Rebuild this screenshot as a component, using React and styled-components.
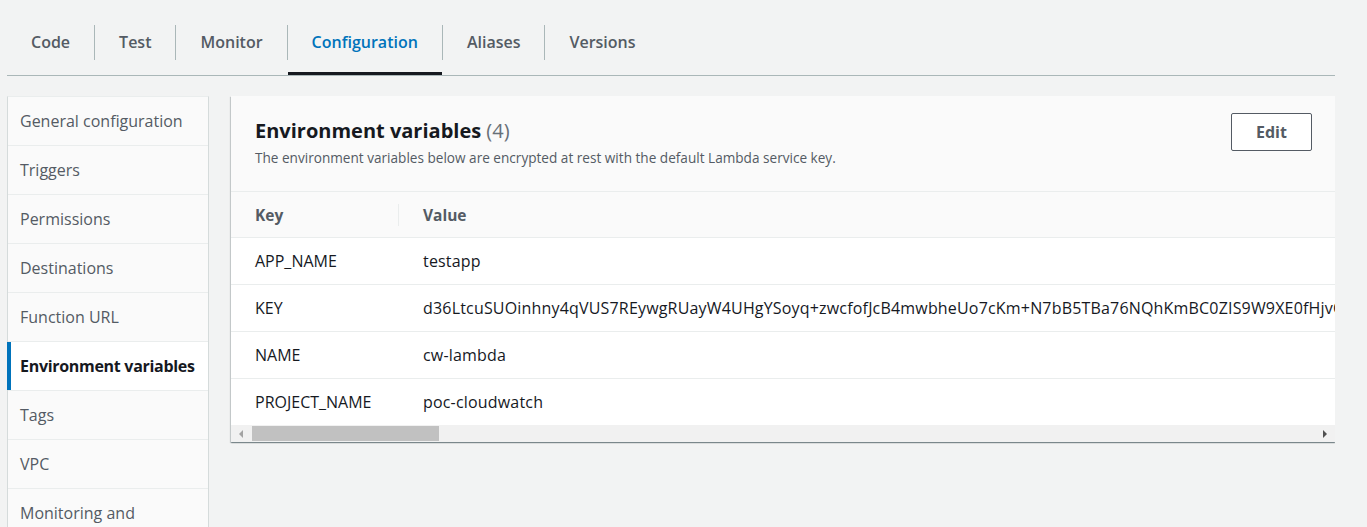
import React from "react";
import styled, { createGlobalStyle } from "styled-components";

const GlobalStyle = createGlobalStyle`
  body {
    margin: 0;
    background: #f2f3f3;
    font-family: "Open Sans", "Noto Sans", sans-serif;
    color: #16191f;
  }
`;

const Page = styled.div`
  width: 1328px;
  padding-left: 7px;
  height: 527px;
  overflow: hidden;
`;

const TabBar = styled.div`
  display: flex;
  align-items: flex-start;
  padding-top: 24px;
  border-bottom: 1px solid #aab7b8;
`;

const Tab = styled.div`
  padding: 0 24px 12px;
  line-height: 36px;
  font-size: 16px;
  font-weight: 600;
  color: ${(p) => (p.$active ? "#0073bb" : "#545b64")};
  border-bottom: 3px solid ${(p) => (p.$active ? "#16191f" : "transparent")};
`;

const TabDivider = styled.div`
  width: 1px;
  height: 35px;
  margin-top: 1px;
  background: #aab7b8;
`;

const Body = styled.div`
  display: flex;
  align-items: flex-start;
  gap: 22px;
  padding-top: 20px;
`;

const Sidebar = styled.div`
  width: 200px;
  flex-shrink: 0;
  border-left: 1px solid #d5dbdb;
  border-right: 1px solid #d5dbdb;
  border-top: 1px solid #eaeded;
  background: #fafafa;
`;

const NavItem = styled.div`
  position: relative;
  min-height: 24px;
  padding: 12px 8px 12px 12px;
  line-height: 24px;
  font-size: 16px;
  border-bottom: 1px solid #eaeded;
  background: ${(p) => (p.$active ? "#ffffff" : "#fafafa")};
  color: ${(p) => (p.$active ? "#16191f" : "#545b64")};
  font-weight: ${(p) => (p.$active ? 700 : 400)};
  white-space: ${(p) => (p.$active ? "nowrap" : "normal")};
  letter-spacing: ${(p) => (p.$active ? "-0.3px" : "0")};

  &::before {
    content: "";
    display: ${(p) => (p.$active ? "block" : "none")};
    position: absolute;
    left: -1px;
    top: 0;
    bottom: 0;
    width: 4px;
    background: #0073bb;
  }
`;

const Panel = styled.div`
  flex: 1;
  background: #ffffff;
  overflow: hidden;
  box-shadow: 0 1px 1px 0 rgba(0, 28, 36, 0.3),
    1px 1px 1px 0 rgba(0, 28, 36, 0.15), -1px 1px 1px 0 rgba(0, 28, 36, 0.15);
`;

const PanelHeader = styled.div`
  display: flex;
  justify-content: space-between;
  align-items: flex-start;
  height: 95px;
  padding: 0 23px 0 24px;
  background: #fafafa;
  border-bottom: 1px solid #eaeded;
`;

const Heading = styled.div`
  padding-top: 21px;
`;

const Title = styled.h2`
  margin: 0;
  font-size: 20px;
  line-height: 28px;
  font-weight: 700;
  color: #16191f;
`;

const Count = styled.span`
  font-weight: 400;
  color: #687078;
`;

const Description = styled.p`
  margin: 4px 0 0;
  font-size: 13.6px;
  line-height: 18px;
  color: #545b64;
`;

const EditButton = styled.button`
  margin-top: 17px;
  width: 81px;
  height: 38px;
  border: 1px solid #545b64;
  border-radius: 2px;
  background: #ffffff;
  font-family: inherit;
  font-size: 16px;
  font-weight: 700;
  color: #545b64;
`;

const TableWrap = styled.div`
  overflow: hidden;
`;

const Row = styled.div`
  display: flex;
  align-items: center;
  height: ${(p) => (p.$head ? "45px" : "46px")};
  border-bottom: 1px solid #eaeded;
  background: ${(p) => (p.$head ? "#fafafa" : "#ffffff")};
  font-size: ${(p) => (p.$head ? "15.5px" : "16px")};
  font-weight: ${(p) => (p.$head ? 700 : 400)};
  color: ${(p) => (p.$head ? "#545b64" : "#16191f")};
  white-space: nowrap;

  &:last-child {
    border-bottom: none;
  }
`;

const KeyCell = styled.div`
  width: 143px;
  flex-shrink: 0;
  padding-left: 24px;
`;

const HeadDivider = styled.div`
  width: 1px;
  height: 22px;
  background: #eaeded;
  flex-shrink: 0;
`;

const ValueCell = styled.div`
  padding-left: ${(p) => (p.$body ? "25px" : "24px")};
  letter-spacing: ${(p) => (p.$body ? "0.18px" : "0")};
`;

const Scrollbar = styled.div`
  display: flex;
  align-items: center;
  height: 17px;
  background: #f1f1f1;
`;

const Arrow = styled.div`
  width: 0;
  height: 0;
  border-top: 4px solid transparent;
  border-bottom: 4px solid transparent;
  ${(p) =>
    p.$right
      ? "border-left: 4px solid #505050; margin: 0 8px 0 auto;"
      : "border-right: 4px solid #a3a3a3; margin: 0 0 0 8px;"}
`;

const Thumb = styled.div`
  width: 187px;
  height: 15px;
  margin-left: 9px;
  background: #c1c1c1;
`;

const tabs = ["Code", "Test", "Monitor", "Configuration", "Aliases", "Versions"];

const nav = [
  "General configuration",
  "Triggers",
  "Permissions",
  "Destinations",
  "Function URL",
  "Environment variables",
  "Tags",
  "VPC",
  "Monitoring and operations tools",
];

const vars = [
  ["APP_NAME", "testapp"],
  [
    "KEY",
    "d36LtcuSUOinhny4qVUS7REywgRUayW4UHgYSoyq+zwcfofJcB4mwbheUo7cKm+N7bB5TBa76NQhKmBC0ZIS9W9XE0fHjvQ2mK8pRt",
  ],
  ["NAME", "cw-lambda"],
  ["PROJECT_NAME", "poc-cloudwatch"],
];

const App = () => {
  return (
    <Page>
      <GlobalStyle />
      <TabBar>
        {tabs.map((t, i) => (
          <React.Fragment key={t}>
            {i > 0 && <TabDivider />}
            <Tab $active={t === "Configuration"}>{t}</Tab>
          </React.Fragment>
        ))}
      </TabBar>
      <Body>
        <Sidebar>
          {nav.map((n) => (
            <NavItem key={n} $active={n === "Environment variables"}>
              {n}
            </NavItem>
          ))}
        </Sidebar>
        <Panel>
          <PanelHeader>
            <Heading>
              <Title>
                Environment variables <Count>(4)</Count>
              </Title>
              <Description>
                The environment variables below are encrypted at rest with the
                default Lambda service key.
              </Description>
            </Heading>
            <EditButton>Edit</EditButton>
          </PanelHeader>
          <TableWrap>
            <Row $head>
              <KeyCell>Key</KeyCell>
              <HeadDivider />
              <ValueCell>Value</ValueCell>
            </Row>
            {vars.map(([k, v]) => (
              <Row key={k}>
                <KeyCell>{k}</KeyCell>
                <ValueCell $body>{v}</ValueCell>
              </Row>
            ))}
          </TableWrap>
          <Scrollbar>
            <Arrow />
            <Thumb />
            <Arrow $right />
          </Scrollbar>
        </Panel>
      </Body>
    </Page>
  );
};

export default App;
